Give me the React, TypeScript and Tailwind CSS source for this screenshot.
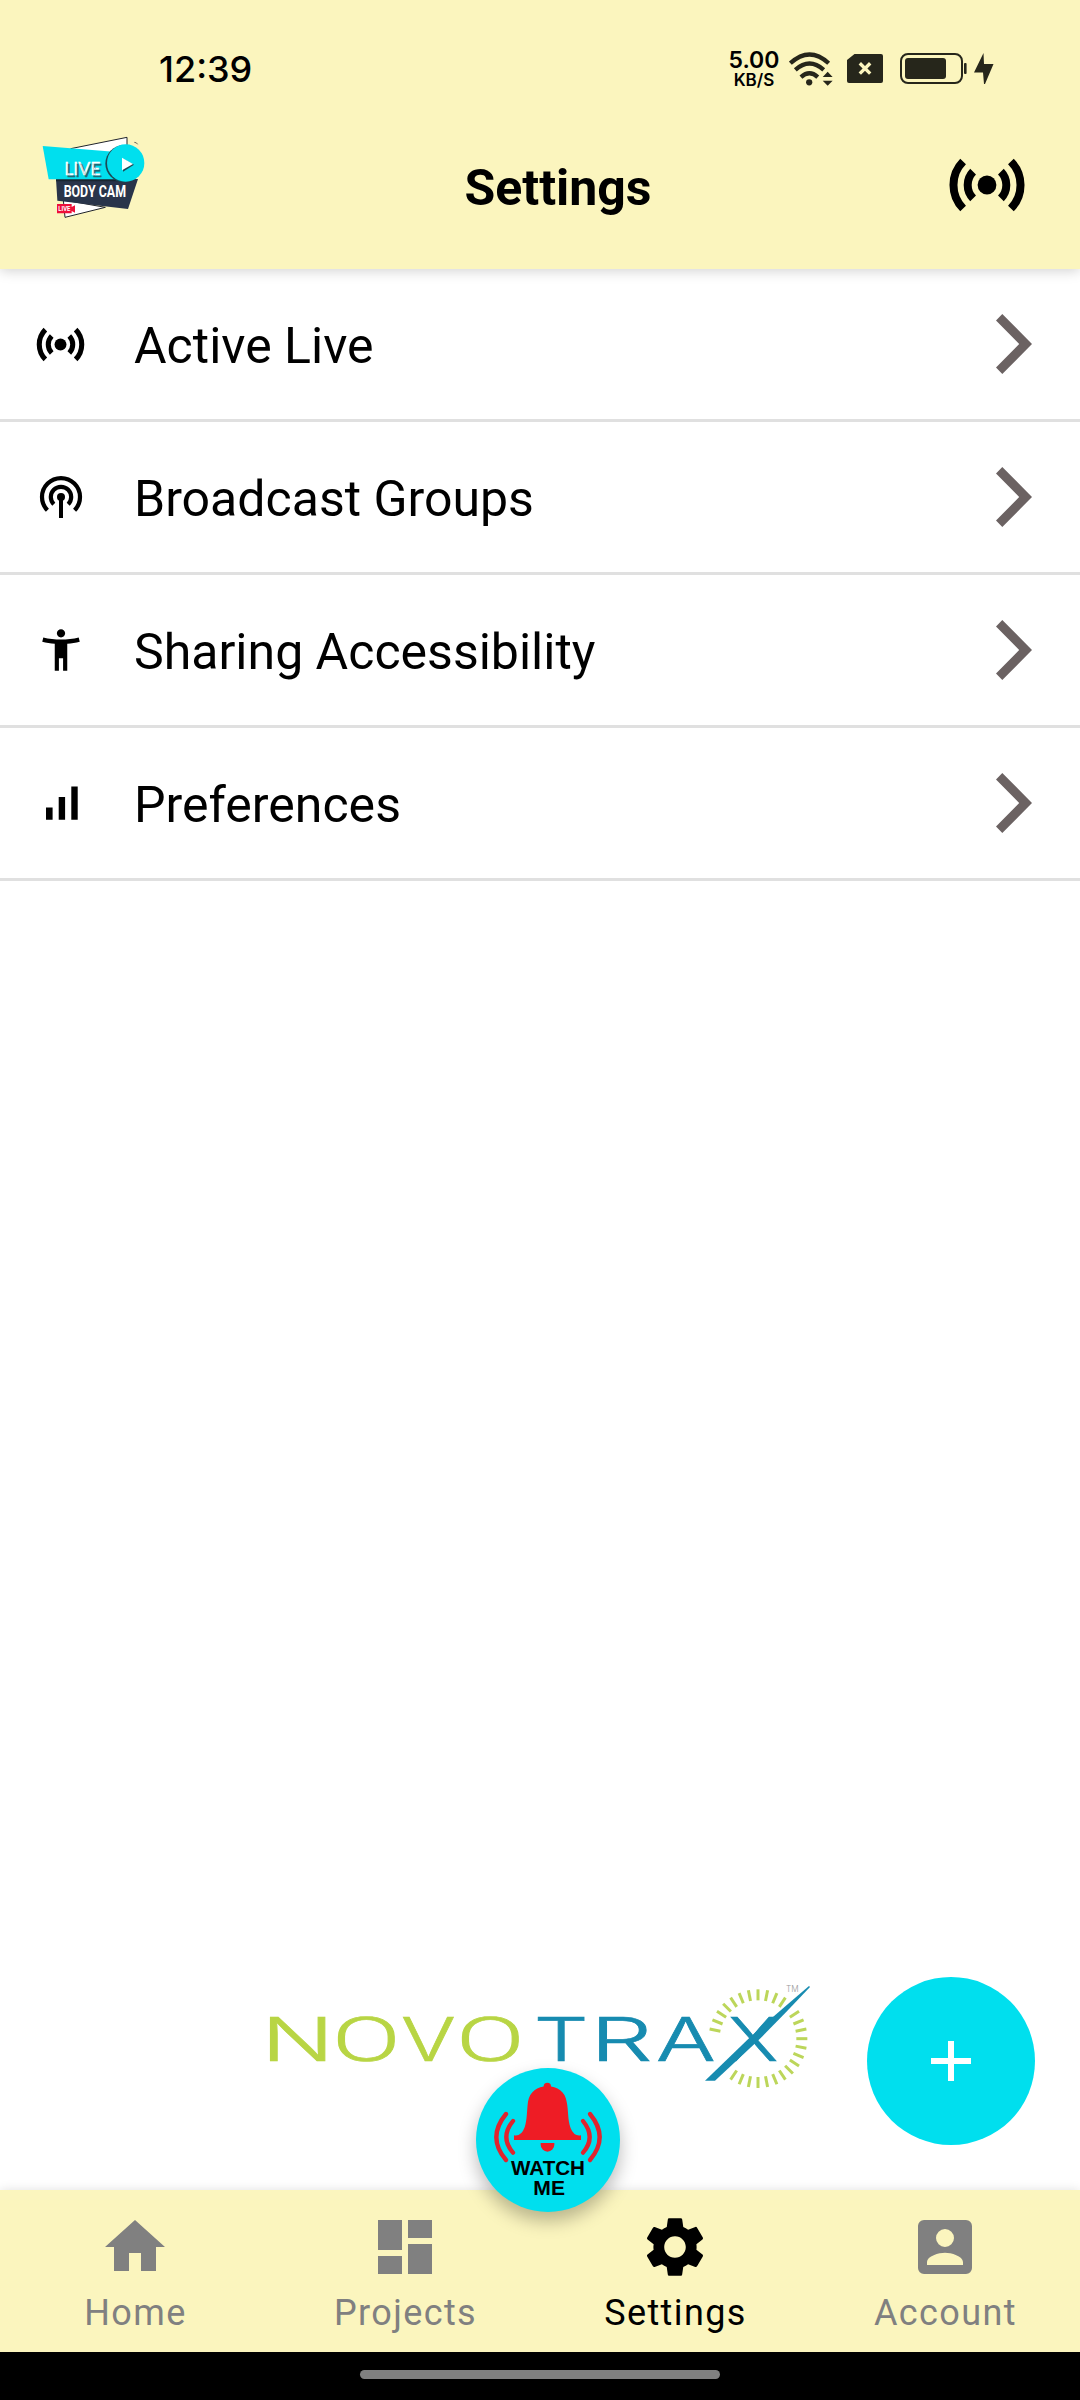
import type { ReactNode } from "react";
import { MdAccessibilityNew, MdDashboard, MdHome, MdSettings } from "react-icons/md";

type SettingsItem = {
  label: string;
  icon: ReactNode;
};

type TabItem = {
  label: string;
  icon: ReactNode;
  active?: boolean;
};

type WordmarkLetter = {
  char: string;
  x: number;
  scale: number;
  font?: string;
};

const TICK_STEP = 11.25;

// 32 ticks around the X, leaving gaps where the swoosh crosses the ring
const ticks = Array.from({ length: 27 }, (_, i) => i - 7).filter((n) => n !== 4);

const novoLetters: WordmarkLetter[] = [
  { char: "N", x: 34, scale: 1.58 },
  { char: "O", x: 247, scale: 1.66, font: "Roboto" },
  { char: "V", x: 453, scale: 1.34 },
  { char: "O", x: 619, scale: 1.66, font: "Roboto" },
];

const traxLetters: WordmarkLetter[] = [
  { char: "T", x: 851, scale: 1.42 },
  { char: "R", x: 1021, scale: 1.62 },
  { char: "A", x: 1218, scale: 1.46 },
  { char: "X", x: 1433, scale: 1.26 },
];

function LiveIcon({ className }: { className?: string }) {
  return (
    <svg viewBox="-45 -45 90 90" className={className} fill="none" stroke="currentColor" strokeWidth="8">
      <circle r="9.4" fill="currentColor" stroke="none" />
      <path d="M-13.9-13.4A19.3 19.3 0 0 0-13.9 13.4M13.9-13.4A19.3 19.3 0 0 1 13.9 13.4" />
      <path d="M-23.9-23.5A33.5 33.5 0 0 0-23.9 23.5M23.9-23.5A33.5 33.5 0 0 1 23.9 23.5" />
    </svg>
  );
}

function BroadcastIcon() {
  return (
    <svg viewBox="-25 -25 50 50" className="size-[50px]" fill="none" stroke="currentColor" strokeWidth="4.2">
      <path d="M-13.6 13.3A19 19 0 1 1 13.6 13.3" />
      <path d="M-7.2 7.2A10.2 10.2 0 1 1 7.2 7.2" />
      <circle r="4" fill="currentColor" stroke="none" />
      <path d="M0 0V21" strokeWidth="4" />
    </svg>
  );
}

function BarsIcon() {
  return (
    <svg viewBox="0 0 50 50" className="size-[50px]" fill="currentColor">
      <path d="M10 29.5h6.6v12.3H10zM22.7 18.9h6.4v22.9h-6.4zM35.3 8.4h6.4v33.4h-6.4z" />
    </svg>
  );
}

function AccountIcon() {
  return (
    <svg viewBox="0 0 24 24" className="size-[72px]" fill="currentColor">
      <path d="M3 5v14a2 2 0 0 0 2 2h14a2 2 0 0 0 2-2V5a2 2 0 0 0-2-2H5a2 2 0 0 0-2 2zm12 4a3 3 0 1 1-6 0 3 3 0 0 1 6 0zm-9 8c0-2 4-3.1 6-3.1s6 1.1 6 3.1v1H6v-1z" />
    </svg>
  );
}

function Chevron() {
  return (
    <svg viewBox="0 0 36 60" className="h-[60px] w-9" fill="#6b6262">
      <path d="M6.3 0L36 30 6.3 60 0 53.6 23.2 30 0 6.4z" />
    </svg>
  );
}

function StatusBar() {
  return (
    <div className="flex h-[101px] items-center pt-9 pl-[159px] pr-[86px] text-[#26261b]">
      <span className="font-['Inter'] text-[36px] leading-none font-medium text-black">12:39</span>
      <div className="ml-auto flex w-[52px] flex-col items-center font-['Inter'] font-semibold text-black">
        <span className="text-[23px] leading-[23px]">5.00</span>
        <span className="text-[17px] leading-[17px]">KB/S</span>
      </div>
      <svg viewBox="268 60 134 103" className="ml-[9px] h-[34px] w-[45px]" fill="none" stroke="currentColor">
        <path d="M271 94Q329 41 387 94" strokeWidth="13" />
        <path d="M286 114Q329 76 372 114" strokeWidth="13" />
        <path d="M303 136Q329 113 354 136" strokeWidth="13" />
        <circle cx="328" cy="152" r="9.5" fill="currentColor" stroke="none" />
        <path d="M384 120l15 16h-30zM384 162l15-15h-30z" fill="currentColor" stroke="none" />
      </svg>
      <svg viewBox="0 0 36 29" className="ml-[13px] h-[29px] w-9" fill="currentColor">
        <path d="M7.5 0H34a2 2 0 0 1 2 2v25a2 2 0 0 1-2 2H2a2 2 0 0 1-2-2V6z" />
        <path d="M12.8 9.2l10.4 10.4M23.2 9.2L12.8 19.6" stroke="#fbf5be" strokeWidth="3.4" />
      </svg>
      <svg viewBox="0 0 67 31" className="ml-[17px] h-[31px] w-[67px]">
        <rect x="1" y="1" width="61" height="29" rx="7" fill="none" stroke="currentColor" strokeWidth="2" />
        <rect x="5" y="5" width="41" height="21" rx="3" fill="currentColor" />
        <rect x="64" y="10" width="2.6" height="11" rx="1" fill="currentColor" />
      </svg>
      <svg viewBox="0 0 20 31" className="ml-[7px] h-[31px] w-5" fill="currentColor">
        <path d="M9.5 0L0 19.5h9L10 31h1l8.5-20H10z" />
      </svg>
    </div>
  );
}

function BodyCamLogo() {
  return (
    <svg viewBox="0 0 390 330" className="h-[110px] w-[130px]">
      <path d="M122 86L291 52V110L122 100z" fill="#fff" stroke="#20242c" strokeWidth="3" />
      <path d="M313 67q7 0 10 6" fill="none" stroke="#20242c" strokeWidth="2" />
      <path d="M100 240L105 292 226 262z" fill="#fff" stroke="#20242c" strokeWidth="3" />
      <path d="M78 177H324L294 267 82 242z" fill="#29344a" />
      <path d="M78 177H290V184H78z" fill="#1a2530" />
      <path d="M38 78L270 97V178H56z" fill="#00dfee" />
      <circle cx="282" cy="131" r="56" fill="#1d4a55" />
      <circle cx="287" cy="129" r="56" fill="#00dfee" />
      <path d="M279 116L312 134 279 155z" fill="#1d4a55" />
      <path d="M276 113L309 132 276 151z" fill="#fff" />
      <text
        x="103"
        y="165"
        fontFamily="Lato"
        fontSize="54"
        fill="#fff"
        stroke="#fff"
        textLength="108"
        lengthAdjust="spacingAndGlyphs"
        className="[text-shadow:2px_2px_0_#1d6a75]"
      >
        LIVE
      </text>
      <text x="101" y="231" fontFamily="Roboto" fontWeight="700" fontSize="52" fill="#fff" textLength="187" lengthAdjust="spacingAndGlyphs">
        BODY CAM
      </text>
      <path d="M81 252H125V261L135 256V278L125 273V280H81z" fill="#ee0f3a" />
      <text x="85" y="273" fontFamily="Roboto" fontWeight="700" fontSize="20" fill="#fff" textLength="36" lengthAdjust="spacingAndGlyphs">
        LIVE
      </text>
    </svg>
  );
}

function Letter({ char, x, scale, font = "Inter" }: WordmarkLetter) {
  return (
    <text transform={`translate(${x} 302) scale(${scale} 1)`} fontSize="182" fontFamily={font}>
      {char}
    </text>
  );
}

function NovotraxLogo() {
  return (
    <svg viewBox="0 0 1740 420" className="h-[140px] w-[580px]" fontWeight="300">
      <g fill="#b8d544" stroke="#b8d544" strokeWidth="2">
        {novoLetters.map((letter) => (
          <Letter key={letter.x} {...letter} />
        ))}
      </g>
      <g fill="#178bb0" stroke="#178bb0" strokeWidth="2">
        {traxLetters.map((letter) => (
          <Letter key={letter.x} {...letter} />
        ))}
      </g>
      <g stroke="#bcd65a" strokeWidth="9">
        {ticks.map((n) => (
          <line key={n} x1="1524" x2="1524" y1="88" y2="121" transform={`rotate(${n * TICK_STEP} 1524 236)`} />
        ))}
      </g>
      <path d="M1365 362H1395L1526 240Q1604 162 1680 81L1677 78Q1590 152 1504 228z" fill="#178bb0" />
      <text x="1608" y="97" fontFamily="Inter" fontSize="25" fill="#999" textLength="38" lengthAdjust="spacingAndGlyphs">
        TM
      </text>
    </svg>
  );
}

function WatchMeButton() {
  return (
    <button type="button" aria-label="Watch me" className="size-36 rounded-full bg-[#00dfee] shadow-[0_9px_18px_rgba(0,0,0,0.27)]">
      <svg viewBox="78 54 432 432" className="size-full">
        <g fill="#ee1c25">
          <circle cx="292" cy="109" r="11" />
          <path d="M192 270V256Q214 260 224 232C232 205 230 185 234 155C239 125 262 110 292 108C322 110 346 125 350 155C356 185 352 205 362 235Q372 260 393 256V270z" />
          <path d="M272 279H313V284A20.5 21 0 0 1 272 284z" />
        </g>
        <g fill="none" stroke="#e0242e" strokeWidth="13" strokeLinecap="round">
          <path d="M168 192Q110 262 168 330M189 213Q149 262 189 308" />
          <path d="M420 192Q478 262 420 330M399 213Q439 262 399 308" />
        </g>
        <g fontFamily="Liberation Sans" fontWeight="700" fontSize="62">
          <text x="183" y="376" textLength="222" lengthAdjust="spacingAndGlyphs">WATCH</text>
          <text x="250" y="435" textLength="95" lengthAdjust="spacingAndGlyphs">ME</text>
        </g>
      </svg>
    </button>
  );
}

const settingsItems: SettingsItem[] = [
  { label: "Active Live", icon: <LiveIcon className="mr-px size-[57px]" /> },
  { label: "Broadcast Groups", icon: <BroadcastIcon /> },
  { label: "Sharing Accessibility", icon: <MdAccessibilityNew size={50} /> },
  { label: "Preferences", icon: <BarsIcon /> },
];

const tabs: TabItem[] = [
  { label: "Home", icon: <MdHome size={72} /> },
  { label: "Projects", icon: <MdDashboard size={72} /> },
  { label: "Settings", icon: <MdSettings size={72} />, active: true },
  { label: "Account", icon: <AccountIcon /> },
];

export default function App() {
  return (
    <div className="flex h-[2400px] w-[1080px] flex-col overflow-hidden bg-white font-['Roboto',sans-serif] text-black">
      <header className="relative z-10 bg-[#fbf5be] shadow-[0_2px_12px_rgba(0,0,0,0.18)]">
        <StatusBar />
        <div className="flex h-[168px] items-center pr-12 pl-[30px]">
          <div className="mb-5">
            <BodyCamLogo />
          </div>
          <h1 className="flex-1 pt-[5px] pl-[14px] text-center text-[50px] leading-none font-bold">Settings</h1>
          <LiveIcon className="size-[90px]" />
        </div>
      </header>

      <ul>
        {settingsItems.map((item) => (
          <li key={item.label} className="flex h-[153px] items-center border-b-3 border-[#e0e0e0] pr-12 pl-8">
            <span className="flex w-[58px] justify-center">{item.icon}</span>
            <span className="flex-1 pt-[3px] pl-11 text-[50px] leading-none">{item.label}</span>
            <Chevron />
          </li>
        ))}
      </ul>

      <div className="mt-auto flex h-[230px] items-start pl-[250px]">
        <NovotraxLogo />
        <button
          type="button"
          aria-label="Add"
          className="mt-[17px] ml-[37px] flex size-[168px] items-center justify-center rounded-full bg-[#00dfee]"
        >
          <svg viewBox="0 0 40 40" className="size-10" stroke="#fff" strokeWidth="6">
            <path d="M20 0V40M0 20H40" />
          </svg>
        </button>
      </div>

      <nav className="relative grid h-[162px] grid-cols-4 bg-[#fbf5be] shadow-[0_0_10px_rgba(0,0,0,0.12)]">
        {tabs.map((tab) => (
          <div key={tab.label} className={`flex flex-col items-center pt-[21px] ${tab.active ? "text-black" : "text-[#808080]"}`}>
            {tab.icon}
            <span className="mt-3 pl-px text-[36px] leading-[36px] tracking-[1.4px]">{tab.label}</span>
          </div>
        ))}
        <div className="absolute -top-[122px] left-[476px]">
          <WatchMeButton />
        </div>
      </nav>

      <div className="relative flex h-12 justify-center bg-black pt-[18px]">
        <div className="h-[9px] w-[360px] rounded-full bg-[#808080]" />
      </div>
    </div>
  );
}
